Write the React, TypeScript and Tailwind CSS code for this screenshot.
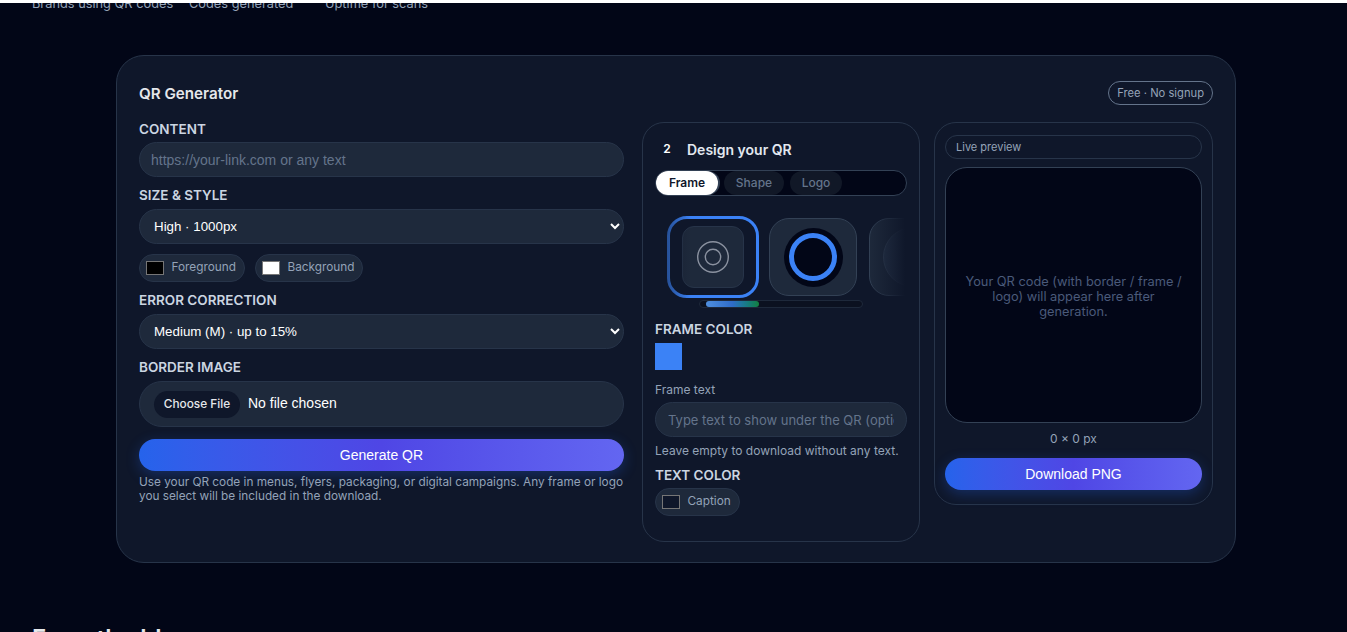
function Label({ children }: { children: React.ReactNode }) {
  return <div className="text-[13.5px] leading-[17px] font-semibold text-[#cbd5e1]">{children}</div>;
}

function ColorChip({ color, label }: { color: string; label: string }) {
  return (
    <div className="flex h-[28px] items-center gap-[7.5px] rounded-full border border-[#273449] bg-[#1e293b] pl-[6px] pr-[8px]">
      <span className="h-[14px] w-[18px] border border-[#767676]" style={{ backgroundColor: color }} />
      <span className="text-[11.8px] text-[#94a3b8]">{label}</span>
    </div>
  );
}

const selectClass =
  "h-[35px] w-full rounded-full border border-[#273449] bg-[#1e293b] pl-[10px] pr-[2px] font-['Liberation_Sans',sans-serif] text-[13.33px] text-white";

export default function App() {
  return (
    <div className="h-[632px] overflow-hidden bg-[#020617] font-['Inter',sans-serif]">
      <div className="relative z-10 h-[3px] bg-white" />

      {/* stat labels cut off by the scroll position */}
      <div className="-mt-[8px] flex h-[17px] pl-[32px] text-[12.8px] leading-[17px] text-[#94a3b8]">
        <span className="w-[157px]">Brands using QR codes</span>
        <span className="w-[136px]">Codes generated</span>
        <span>Uptime for scans</span>
      </div>

      <section className="ml-[116px] mt-[43px] h-[508px] w-[1120px] rounded-[28px] border border-[#273449] bg-[#0f172a] px-[22px] pt-[24px]">
        <div className="flex items-center justify-between">
          <h2 className="pt-[2px] text-[15.2px] font-semibold leading-[24px] text-[#e5e7eb]">QR Generator</h2>
          <span className="rounded-full border border-[#64748b] px-[8px] py-[3px] text-[11.2px] leading-[16px] text-[#94a3b8]">
            Free · No signup
          </span>
        </div>

        <div className="mt-[16px] flex items-start">
          {/* left column */}
          <div className="-mt-[1px] flex w-[485px] shrink-0 flex-col">
            <Label>CONTENT</Label>
            <input
              placeholder="https://your-link.com or any text"
              className="mt-[4px] h-[35px] rounded-full border border-[#273449] bg-[#1e293b] pl-[11px] font-['Liberation_Sans',sans-serif] text-[14px] text-white placeholder:text-[#64748b]"
            />

            <div className="mt-[10px]"><Label>SIZE &amp; STYLE</Label></div>
            <div className="mt-[5px]">
              <select className={selectClass} defaultValue="high">
                <option value="high">High · 1000px</option>
              </select>
            </div>

            <div className="mt-[10px] flex gap-[10px]">
              <ColorChip color="#000000" label="Foreground" />
              <ColorChip color="#ffffff" label="Background" />
            </div>

            <div className="mt-[10px]"><Label>ERROR CORRECTION</Label></div>
            <div className="mt-[5px]">
              <select className={selectClass} defaultValue="m">
                <option value="m">Medium (M) · up to 15%</option>
              </select>
            </div>

            <div className="mt-[10px]"><Label>BORDER IMAGE</Label></div>
            <input
              type="file"
              className="mt-[5px] h-[46px] w-full rounded-full border border-[#273449] bg-[#1e293b] pl-[14px] pt-[9px] font-['Liberation_Sans',sans-serif] text-[14px] text-white file:mr-[8px] file:h-[27px] file:w-[86px] file:rounded-full file:border-0 file:bg-[#0f172a] file:font-['Inter',sans-serif] file:text-[11.8px] file:font-medium file:text-[#e5e7eb]"
            />

            <button className="mt-[12px] h-[32px] rounded-full bg-gradient-to-r from-[#2563eb] via-[#4f46e5] to-[#6366f1] font-['Liberation_Sans',sans-serif] text-[14px] text-white shadow-[0_4px_14px_rgba(37,99,235,0.3)]">
              Generate QR
            </button>
            <p className="mt-[4px] text-[11.8px] leading-[14px] text-[#94a3b8]">
              Use your QR code in menus, flyers, packaging, or digital campaigns. Any frame or logo you select will be included in the download.
            </p>
          </div>

          {/* design column */}
          <div className="ml-[18px] h-[420px] w-[278px] shrink-0 rounded-[22px] border border-[#273449] px-[12px] pt-[14px]">
            <div className="flex h-[24px] items-center">
              <span className="w-[24px] text-center text-[12px] font-semibold text-white">2</span>
              <span className="ml-[8px] text-[14px] font-semibold text-[#e2e8f0]">Design your QR</span>
            </div>
            <div className="mt-[9px] flex h-[26px] items-center gap-[6px] rounded-full border border-[#334155] bg-[#020617]">
              <span className="flex h-[24px] w-[62px] items-center justify-center rounded-full bg-white text-[12px] font-semibold text-[#0f172a] shadow-[2px_0_0_#334155]">Frame</span>
              <span className="flex h-[24px] w-[60px] items-center justify-center rounded-full bg-[#111827] text-[12px] font-medium text-[#64748b]">Shape</span>
              <span className="flex h-[24px] w-[52px] items-center justify-center rounded-full bg-[#111827] text-[12px] font-medium text-[#64748b]">Logo</span>
            </div>

            <div className="relative mt-[20px] flex h-[82px] w-[250px] items-center overflow-hidden pl-[12px]">
              <div className="flex h-[82px] w-[92px] shrink-0 items-center justify-center rounded-[20px] border-[3px] border-[#3b82f6]">
                <div className="flex h-[62px] w-[62px] items-center justify-center rounded-[12px] border border-[#273449] bg-[#1e293b]">
                  <svg width="34" height="34" viewBox="0 0 34 34" fill="none" stroke="#8b92a0" strokeWidth="1.4">
                    <circle cx="17" cy="17" r="15.3" />
                    <circle cx="17" cy="17" r="7.7" />
                  </svg>
                </div>
              </div>
              <div className="ml-[10px] flex h-[78px] w-[88px] shrink-0 items-center justify-center rounded-[20px] border border-[#334155] bg-[#1e293b]">
                <div className="flex h-[59px] w-[59px] items-center justify-center rounded-full bg-[#020617]">
                  <div className="h-[48px] w-[48px] rounded-full border-[5px] border-[#3b82f6]" />
                </div>
              </div>
              <div className="ml-[12px] flex h-[78px] w-[88px] shrink-0 items-center justify-center rounded-[20px] border border-[#334155] bg-[#1e293b]">
                <div className="h-[60px] w-[60px] rounded-full border border-[#334155] bg-[#273449]" />
              </div>
              <div className="absolute inset-y-0 left-0 w-[36px] bg-gradient-to-r from-[#0f172a]/70 to-transparent" />
              <div className="absolute inset-y-0 right-0 w-[36px] bg-gradient-to-r from-transparent to-[#0f172a]" />
            </div>

            <div className="ml-[44px] mt-[2px] h-[8px] w-[164px] rounded-full border border-[#1e293b] bg-[#0b1120] pl-[6px]">
              <div className="h-full w-[53px] rounded-full bg-gradient-to-r from-[#4f8fdf] via-[#2f6cc8] to-[#15803d]" />
            </div>

            <div className="mt-[13px]"><Label>FRAME COLOR</Label></div>
            <div className="mt-[5px] h-[27px] w-[27px] bg-[#3b82f6]" />

            <div className="mt-[12px] text-[12px] leading-[16px] text-[#94a3b8]">Frame text</div>
            <input
              placeholder="Type text to show under the QR (optional)"
              className="mt-[4px] h-[35px] w-full rounded-full border border-[#273449] bg-[#1e293b] px-[12px] text-[13px] text-white placeholder:text-[#64748b]"
            />
            <p className="mt-[6px] text-[12px] leading-[16px] text-[#94a3b8]">Leave empty to download without any text.</p>

            <div className="mt-[8px]"><Label>TEXT COLOR</Label></div>
            <div className="mt-[4px] flex">
              <ColorChip color="#0f172a" label="Caption" />
            </div>
          </div>

          {/* preview column */}
          <div className="ml-[14px] h-[383px] w-[279px] shrink-0 rounded-[22px] border border-[#273449] px-[10px] pt-[12px]">
            <div className="flex h-[24px] items-center rounded-full border border-[#273449] px-[10px] text-[11px] text-[#94a3b8]">Live preview</div>
            <div className="mt-[8px] flex h-[256px] items-center justify-center rounded-[22px] border border-[#334155] bg-[#020617] px-[16px] pt-[2px] text-center text-[12.8px] leading-[15px] text-[#4a5a7a]">
              Your QR code (with border / frame / logo) will appear here after generation.
            </div>
            <div className="mt-[8px] text-center text-[12px] leading-[16px] text-[#94a3b8]">0 × 0 px</div>
            <button className="mt-[11px] h-[32px] w-full rounded-full bg-gradient-to-r from-[#2563eb] via-[#4f46e5] to-[#6366f1] font-['Liberation_Sans',sans-serif] text-[14px] text-white shadow-[0_4px_14px_rgba(37,99,235,0.3)]">
              Download PNG
            </button>
          </div>
        </div>
      </section>

      <h2 className="ml-[32px] mt-[60px] text-[24px] font-semibold leading-[32px] text-[#e5e7eb]">From the blog</h2>
    </div>
  );
}
